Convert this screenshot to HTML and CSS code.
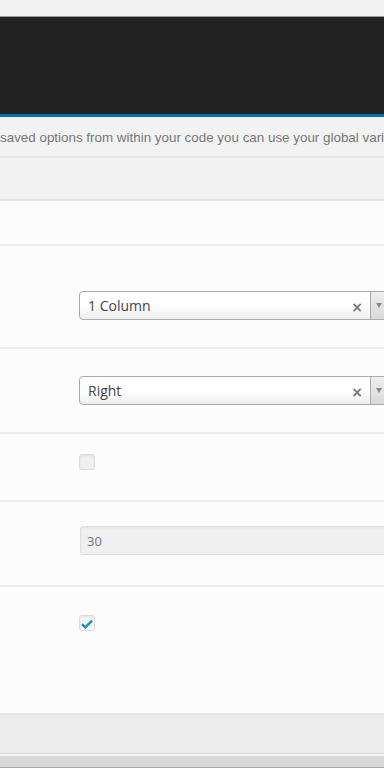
FILE: index.html
```html
<!DOCTYPE html>
<html lang="en">
  <head>
    <meta charset="utf-8" />
    <title>Options</title>
    <link rel="stylesheet" href="styles.css">
  </head>
  <body>
    <div class="page">
      <div class="topstrip"></div>

      <header class="panel-header"></header>

      <p class="intro">saved options from within your code you can use your global variable</p>

      <div class="tabbar"></div>

      <div class="form">
        <div class="row row-empty"></div>

        <div class="row row-select">
          <div class="field">
            <div class="select">
              <span class="select-value">1 Column</span>
              <span class="select-clear">&times;</span>
              <span class="select-arrow"><span class="caret"></span></span>
            </div>
          </div>
        </div>

        <div class="row row-select2">
          <div class="field">
            <div class="select">
              <span class="select-value">Right</span>
              <span class="select-clear">&times;</span>
              <span class="select-arrow"><span class="caret"></span></span>
            </div>
          </div>
        </div>

        <div class="row row-check">
          <div class="field">
            <span class="checkbox"></span>
          </div>
        </div>

        <div class="row row-text">
          <div class="field">
            <div class="text-input">30</div>
          </div>
        </div>

        <div class="row row-check2">
          <div class="field">
            <span class="checkbox checked">
              <svg width="12" height="10" viewBox="0 0 12 10">
                <path d="M1 5.2 L4.4 8.4 L11 1.6" fill="none" stroke="#1e8cbe" stroke-width="2.4" />
              </svg>
            </span>
          </div>
        </div>
      </div>

      <footer class="form-footer"></footer>
      <div class="bottom-bar"></div>
    </div>
  </body>
</html>
```

FILE: styles.css
```css
* {
  margin: 0;
  padding: 0;
  box-sizing: border-box;
}

body {
  background: #f1f1f1;
  font-family: "Open Sans", sans-serif;
  color: #444;
  overflow: hidden;
}

.page {
  width: 384px;
  height: 768px;
  overflow: hidden;
}

.topstrip {
  height: 17px;
  background: #f1f1f1;
  border-bottom: 1px solid #9e9e9e;
}

.panel-header {
  height: 100px;
  background: #222222;
  border-bottom: 3px solid #0073aa;
}

.intro {
  height: 41px;
  padding-top: 13px;
  font-family: "Liberation Sans", Arial, sans-serif;
  font-size: 13.4px;
  color: #777;
  white-space: nowrap;
  overflow: hidden;
  background: #f2f2f2;
  border-bottom: 2px solid #e6e6e6;
}

.tabbar {
  height: 43px;
  background: #f2f2f2;
  border-bottom: 2px solid #e4e4e4;
}

.form {
  background: #fcfcfc;
}

.row {
  border-bottom: 2px solid #ececec;
}

.row:last-child {
  border-bottom: none;
}

.row-empty {
  height: 45px;
}

.row-select {
  height: 103px;
  padding-top: 45px;
}

.row-select2 {
  height: 85px;
  padding-top: 27px;
}

.row-check {
  height: 68px;
  padding-top: 20px;
}

.row-text {
  height: 85px;
  padding-top: 24px;
}

.row-check2 {
  height: 126px;
  padding-top: 28px;
}

.field {
  padding-left: 79px;
}

.select {
  display: flex;
  align-items: center;
  width: 316px;
  height: 29px;
  border: 1px solid #aaa;
  border-radius: 4px;
  background: linear-gradient(#ffffff 0%, #ffffff 50%, #eeeeee 100%);
  box-shadow: 0 1px 0 #fff inset;
}

.select-value {
  flex: 1;
  padding-left: 8px;
  font-size: 14px;
  color: #444;
}

.select-clear {
  width: 14px;
  margin-right: 6px;
  font-family: "DejaVu Sans", sans-serif;
  font-size: 14px;
  font-weight: bold;
  color: #777;
  text-align: center;
  line-height: 1;
  padding-top: 3px;
}

.select-arrow {
  display: flex;
  justify-content: center;
  align-items: center;
  width: 24px;
  align-self: stretch;
  background: linear-gradient(#eeeeee, #d8d8d8);
  border-left: 1px solid #aaa;
  border-radius: 0 4px 4px 0;
}

.select-arrow .caret {
  width: 0;
  height: 0;
  border-left: 3px solid transparent;
  border-right: 3px solid transparent;
  border-top: 5px solid #888;
  margin-right: 8px;
}

.checkbox {
  display: flex;
  justify-content: center;
  align-items: center;
  width: 16px;
  height: 16px;
  border: 1px solid #dcdcdc;
  border-radius: 3px;
  background: #f0f0f0;
  box-shadow: inset 0 1px 2px rgba(0, 0, 0, 0.06);
}

.checkbox.checked {
  background: #f4f4f4;
}

.checkbox svg {
  margin-top: 1px;
}

.text-input {
  width: 340px;
  height: 29px;
  margin-left: 1px;
  padding: 5px 0 0 6px;
  border: 1px solid #dedede;
  border-radius: 3px;
  background: #f0f0f0;
  font-size: 13px;
  color: #777;
  box-shadow: inset 0 1px 2px rgba(0, 0, 0, 0.05);
}

.form-footer {
  height: 41px;
  background: #ededed;
  border-top: 2px solid #e6e6e6;
  border-bottom: 1px solid #dddddd;
}

.bottom-bar {
  height: 15px;
  background: #d8d8d8;
  border-top: 2px solid #f2f2f2;
  border-bottom: 2px solid #aaaaaa;
}
```
